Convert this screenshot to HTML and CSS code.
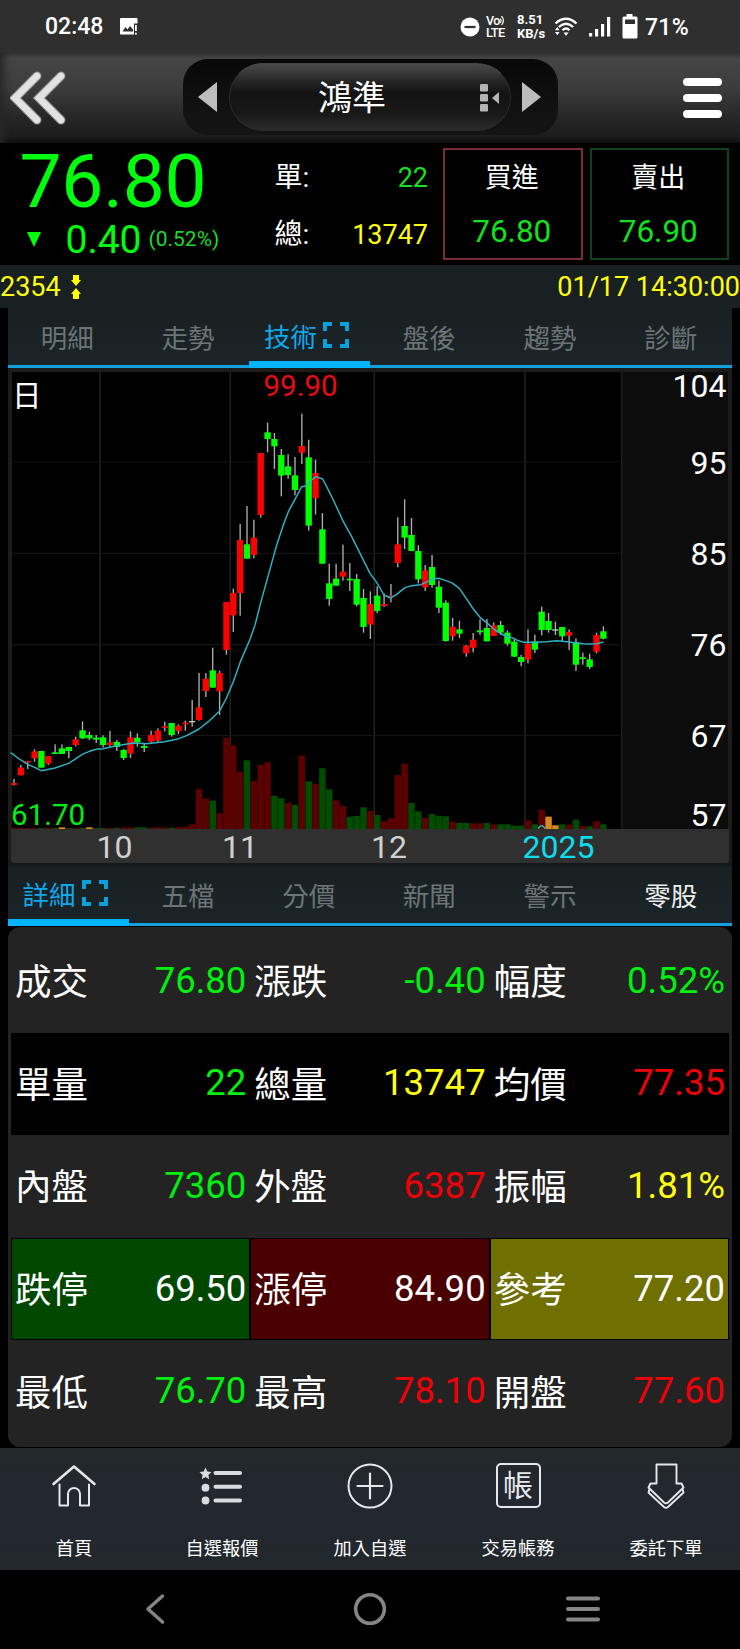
FILE: index.html
```html
<!DOCTYPE html>
<html lang="zh-Hant">
<head>
<meta charset="utf-8">
<title>鴻準 2354</title>
<link rel="stylesheet" href="styles.css">
</head>
<body>
<div class="status">
  <span class="clock">02:48</span>
  <svg class="st-img" width="19" height="19" viewBox="0 0 19 19"><path d="M2 1h15.500a1 1 0 0 1 1 1V6.500h-3.500V17.500H2a1 1 0 0 1-1-1V2a1 1 0 0 1 1-1z" fill="#fff"/><path d="M3.500 14.500l3-4.500 2 2.600 2.500-3.600 3 3.500v2z" fill="#2f2f2f"/><path d="M16 8h1.800v6H16zM16 15.800h1.800v1.800H16z" fill="#fff"/></svg>
  <div class="st-right">
    <svg class="dnd" width="20" height="20" viewBox="0 0 20 20"><circle cx="10" cy="10" r="9.500" fill="#fff"/><path d="M4.500 10h11" stroke="#2f2f2f" stroke-width="2.200"/></svg>
    <div class="volte"><span>Vo<svg width="5" height="9" viewBox="0 0 5 9"><path d="M.3 2.500q1.500 2 0 4.500M1.500 0q3.800 4.500 0 9" fill="none" stroke="#fff" stroke-width="1.200"/></svg></span><span>LTE</span></div>
    <div class="speed"><span>8.51</span><span>KB/s</span></div>
    <svg class="wifi" width="24" height="20" viewBox="0 0 24 20"><g fill="none" stroke="#fff" stroke-width="2.300"><path d="M1.500 6.500Q12-3 22.500 6.500"/><path d="M4.800 10Q12 3.500 19.200 10"/><path d="M8.500 13.200Q12 9.800 15.500 13.200"/></g><path d="M9.500 15.500h5L12 19zM1 13.200L3.300 10l2.300 3.200zM1 15h4.600l-2.300 3.300z" fill="#fff"/></svg>
    <svg class="signal" width="22" height="20" viewBox="0 0 22 20"><path d="M0 16h3.200v3.500H0zM6 12h3.200v7.500H6zM12 7h3.200v12.500H12zM18 0h3.200v19.500H18z" fill="#fff"/></svg>
    <svg class="batt" width="16" height="25" viewBox="0 0 16 25"><path d="M4.500 0h6v2.500H14a1.500 1.500 0 0 1 1.500 1.500v19a1.500 1.500 0 0 1-1.500 1.500H2A1.500 1.500 0 0 1 .5 23V4A1.500 1.500 0 0 1 2 2.500h2.500z" fill="#fff"/><path d="M3 5.500h10V10H3z" fill="#2f2f2f"/></svg>
    <span class="pct">71%</span>
  </div>
</div>

<header class="top">
  <svg class="back" width="56" height="54" viewBox="0 0 56 54"><path d="M27 5L5 27l22 22M51 5L29 27l22 22" fill="none" stroke="#8a8a8a" stroke-width="9" stroke-linecap="round"/><path d="M27 5L5 27l22 22M51 5L29 27l22 22" fill="none" stroke="#e2e2e2" stroke-width="6.800" stroke-linecap="round"/></svg>
  <div class="switcher">
    <svg width="20" height="30" viewBox="0 0 20 30"><path d="M0 15L19 0v30z" fill="#bdbdbd"/></svg>
    <div class="pill"><span>鴻準</span><svg class="grid" width="20" height="28" viewBox="0 0 20 28"><g fill="#b5b5b5"><rect width="8" height="7.500" rx="1.200"/><rect y="10" width="8" height="7.500" rx="1.200"/><rect y="20" width="8" height="7.500" rx="1.200"/><path d="M12 14l7-6v12z"/></g></svg></div>
    <svg width="20" height="30" viewBox="0 0 20 30"><path d="M19 15L0 0v30z" fill="#bdbdbd"/></svg>
  </div>
  <div class="burger"><i></i><i></i><i></i></div>
</header>

<section class="quote">
  <div class="price">
    <div class="last">76.80</div>
    <div class="delta"><i class="down"></i><span class="chg">0.40</span><span class="chgp">(0.52%)</span></div>
  </div>
  <div class="vols">
    <div><span>單:</span><span class="num g2">22</span></div>
    <div><span>總:</span><span class="num y">13747</span></div>
  </div>
  <div class="box buy"><span>買進</span><b>76.80</b></div>
  <div class="box sell"><span>賣出</span><b>76.90</b></div>
</section>
<div class="strip"><span>2354</span><svg width="10" height="24" viewBox="0 0 10 24"><path d="M2 0h6v5h2l-5 6-5-6h2zM2 24h6v-5h2l-5-6-5 6h2z" fill="#ff0"/></svg><span class="time">01/17 14:30:00</span></div>

<nav class="tabs">
  <span>明細</span><span>走勢</span>
  <span class="on">技術<svg class="full" width="26" height="26" viewBox="0 0 26 26"><path d="M2 9V2h7M17 2h7v7M24 17v7h-7M9 24H2v-7" fill="none" stroke="#0b9fdc" stroke-width="4"/></svg></span>
  <span>盤後</span><span>趨勢</span><span>診斷</span>
</nav>

<div class="chart">
  <svg width="724" height="497" viewBox="8 369 724 497">
    <rect x="8" y="368" width="724" height="498" fill="#1c1c1c"/>
    <rect x="12" y="372" width="609" height="457" fill="#000"/>
    <rect x="622.500" y="372" width="105.500" height="457" fill="#0c0c0c"/>
    <path d="M11 829H729V860a3 3 0 0 1-3 3H14a3 3 0 0 1-3-3z" fill="#303030"/>
    <path d="M8 863H732V866H8z" fill="#141a1c"/>
    <path d="M100 372V829M230.300 372V829M374.300 372V829M525 372V829" stroke="#242424" stroke-width="1.400"/>
    <path d="M12 462H621M12 553.300H621M12 644.700H621M12 735.500H621" stroke="#141414" stroke-width="1.200"/>
    <g transform="translate(0 365) scale(.33333)"><g id="volume"></g><g id="candles"></g>
      <polyline id="average" fill="none" stroke="#2fb2c4" stroke-width="4.400" stroke-linejoin="round"/>
      <path d="M1615 1391q5-9 10-9t10 9" fill="none" stroke="#0cd3e0" stroke-width="4"/>
    </g>
    <g class="ct axis"><text x="726.500" y="397">104</text><text x="726.500" y="473.700">95</text><text x="726.500" y="565">85</text><text x="726.500" y="656.300">76</text><text x="726.500" y="747">67</text><text x="726.500" y="826">57</text></g>
    <g class="ct months"><text x="96.500" y="857.700">10</text><text x="222" y="857.700">11</text><text x="371" y="857.700">12</text><text x="522.500" y="857.700" class="year">2025</text></g>
    <text class="ct mode" x="12" y="406">日</text>
    <text class="ct hi" x="263.500" y="396.300">99.90</text>
    <text class="ct lo" x="11" y="824.700">61.70</text>
  </svg>
</div>

<nav class="tabs">
  <span class="on">詳細<svg class="full" width="26" height="26" viewBox="0 0 26 26"><path d="M2 9V2h7M17 2h7v7M24 17v7h-7M9 24H2v-7" fill="none" stroke="#0b9fdc" stroke-width="4"/></svg></span>
  <span>五檔</span><span>分價</span><span>新聞</span><span>警示</span><span class="w">零股</span>
</nav>

<section class="stats">
  <div class="row"><div><span>成交</span><b class="g">76.80</b></div><div><span>漲跌</span><b class="g">-0.40</b></div><div><span>幅度</span><b class="g">0.52%</b></div></div>
  <div class="row dark"><div><span>單量</span><b class="g">22</b></div><div><span>總量</span><b class="y">13747</b></div><div><span>均價</span><b class="r">77.35</b></div></div>
  <div class="row"><div><span>內盤</span><b class="g">7360</b></div><div><span>外盤</span><b class="r">6387</b></div><div><span>振幅</span><b class="y">1.81%</b></div></div>
  <div class="row limits"><div class="lg"><span>跌停</span><b>69.50</b></div><div class="lr"><span>漲停</span><b>84.90</b></div><div class="ly"><span>參考</span><b>77.20</b></div></div>
  <div class="row"><div><span>最低</span><b class="g">76.70</b></div><div><span>最高</span><b class="r">78.10</b></div><div><span>開盤</span><b class="r">77.60</b></div></div>
</section>

<nav class="dock">
  <div><svg width="46" height="46" viewBox="0 0 46 46"><g fill="none" stroke="#e4e8ea" stroke-width="2" stroke-linejoin="round" stroke-linecap="round"><path d="M2.500 21L23 3.500 43.500 21" stroke-width="2.600"/><path d="M8.500 21.500V42.500H17V31a6 6 0 0 1 12 0V42.500H38V21.500"/></g></svg><span>首頁</span></div>
  <div><svg width="46" height="46" viewBox="0 0 46 46"><path d="M16.500 10h24.500M16.500 23.700h24.500M16.500 37.500h24.500" stroke="#d9dddf" stroke-width="4" stroke-linecap="round"/><path d="M6.500 4.500l1.800 4 4.200.5-3.100 3 .8 4.300-3.700-2.200-3.700 2.200.8-4.300-3.100-3 4.200-.5z" fill="#d9dddf"/><circle cx="6.500" cy="24.700" r="3.900" fill="#d9dddf"/><circle cx="6.500" cy="37.500" r="3.900" fill="#d9dddf"/></svg><span>自選報價</span></div>
  <div><svg width="46" height="46" viewBox="0 0 46 46"><circle cx="23" cy="23" r="21.500" fill="none" stroke="#e4e8ea" stroke-width="2"/><path d="M10.500 23h25M23 10.500v25" stroke="#e4e8ea" stroke-width="2.200" stroke-linecap="round"/></svg><span>加入自選</span></div>
  <div><i class="book">帳</i><span>交易帳務</span></div>
  <div><svg width="46" height="46" viewBox="0 0 46 46"><g fill="none" stroke="#e4e8ea" stroke-width="1.900" stroke-linejoin="round"><path d="M13.500 20.500V1.500H33.500V20.500H38.500L40.500 24.500 25 39.500Q23 41 21 39.500L5.500 24.500 7.500 20.500z"/><path d="M6.500 26L5.500 29.500 21 44Q23 45.500 25 44L40.500 29.500 39.500 26"/></g></svg><span>委託下單</span></div>
</nav>
<div class="system">
  <svg width="22" height="32" viewBox="0 0 22 32"><path d="M18.500 3L4 16l14.500 13" fill="none" stroke="#858585" stroke-width="3.500" stroke-linecap="round" stroke-linejoin="round"/></svg>
  <svg width="34" height="34" viewBox="0 0 34 34"><circle cx="17" cy="17" r="14.300" fill="none" stroke="#858585" stroke-width="3.600"/></svg>
  <svg width="34" height="28" viewBox="0 0 34 28"><path d="M2 3.500h30M2 14h30M2 24.500h30" stroke="#858585" stroke-width="4" stroke-linecap="round"/></svg>
</div>
<script src="chart.js"></script>
</body>
</html>
```
FILE: styles.css
```css
* { box-sizing: border-box; }
body { margin: 0; width: 740px; height: 1649px; background: #000; color: #fff; font-family: Roboto, "Noto Sans CJK TC", sans-serif; overflow: hidden; }
svg { display: block; flex: none; }
b, i { font-weight: 400; font-style: normal; }
.g { color: #00f010; }
.g2 { color: #14e01e; }
.y { color: #ffff10; }
.r { color: #f00008; }

.status { height: 53px; background: #2f2f2f; display: flex; align-items: center; padding-left: 45px; }
.clock { font-size: 23px; font-weight: 500; width: 74px; line-height: 26px; padding-top: 1px; }
.st-right { margin-left: auto; width: 280px; display: flex; align-items: center; }
.dnd { margin-right: 6px; }
.volte { width: 31px; font-size: 12.500px; font-weight: 500; line-height: 11.500px; display: flex; flex-direction: column; letter-spacing: -.5px; }
.volte span { display: flex; align-items: center; }
.volte span + span { letter-spacing: -.9px; font-size: 12.800px; letter-spacing: -.6px; }
.speed { width: 37px; font-size: 13px; font-weight: 700; line-height: 13.500px; display: flex; flex-direction: column; }
.wifi { margin-right: 11px; }
.signal { margin-right: 11px; }
.batt { margin-right: 7px; }
.pct { font-size: 23px; font-weight: 500; letter-spacing: .3px; line-height: 26px; padding-top: 2px; }

.top { height: 90px; display: flex; align-items: center; background: linear-gradient(#333 0, #454545 5px, #3c3c3c 35px, #262626 65px, #1c1c1c 84px, #0c0c0c 90px); padding: 0 18px 0 9.500px; box-shadow: inset 8px 0 8px -4px #262626; }
.switcher { margin-left: 117px; width: 375px; height: 76px; border-radius: 25px; background: linear-gradient(#080808, #111 60%, #141414); display: flex; align-items: center; justify-content: space-between; padding: 0 16px 0 15px; margin-top: -3px; }
.pill { width: 282px; height: 68px; border-radius: 34px; background: linear-gradient(#4a4a4a, #262626 26%, #131313 45%, #181818 75%, #2b2b2b); border: 1px solid #2b2b2b; border-top-color: #454545; display: flex; align-items: center; padding-left: 88.500px; font-size: 34px; line-height: 44px; padding-top: 3px; }
.grid { margin-left: 94px; margin-top: -1px; }
.burger { margin-left: auto; width: 39px; display: flex; flex-direction: column; gap: 8.500px; }
.burger i { height: 7.500px; border-radius: 4px; background: #fff; }

.quote { height: 122px; display: flex; }
.price { width: 265px; padding: 11px 0 0 19.500px; color: #00ff0c; }
.last { font-size: 75px; line-height: 54px; letter-spacing: -.3px; }
.delta { display: flex; align-items: center; height: 44px; margin-top: 9px; }
.down { margin-left: 7px; border: 7.500px solid transparent; border-top: 15px solid #00ff0c; border-bottom: 0; }
.chg { margin-left: 25px; font-size: 39px; width: 83px; line-height: 38px; padding-top: 2px; }
.chgp { font-size: 21px; color: #1bd92c; line-height: 24px; }
.vols { width: 178px; padding: 6px 15px 0 9.500px; font-size: 28px; }
.vols div { height: 57px; display: flex; justify-content: space-between; align-items: center; line-height: 40px; }
.num { font-size: 27px; }
.box { margin: 5px 7px 5px 0; width: 139.500px; height: 112px; border: 2px solid #7d2c37; display: flex; flex-direction: column; align-items: center; font-size: 27px; line-height: 40px; padding: 8px 2px 0 0; }
.box.sell { border-color: #0e421a; margin-right: 0; }
.box b { font-size: 31.500px; color: #14e01e; margin-top: 14px; }
.strip { height: 43px; background: #192022; display: flex; align-items: center; color: #ffff10; font-size: 27px; line-height: 40px; }
.strip svg { margin: 0 0 0 10px; }
.strip .time { margin-left: auto; }

.tabs { margin: 0 8px 1px; height: 60px; background: linear-gradient(#192022, #1a2428); display: grid; grid-template-columns: repeat(6, 1fr); border-bottom: 3px solid #14a0dc; }
.tabs span { color: #6c7476; font-size: 26.500px; line-height: 57px; text-align: center; height: 57px; padding: 2px 2px 0 0; }
.tabs .on { color: #0fa8ec; display: flex; justify-content: center; align-items: center; gap: 6.500px; padding: 2px 6px 0 0; box-shadow: 0 3px #00b4ff, inset 0 -4px #00b4ff; }
.full { margin-bottom: 5px; }
.tabs .w { color: #eceeee; }

.chart { margin: 0 8px; height: 497px; }
.chart svg { overflow: visible; }
.ct { font-family: Roboto, "Noto Sans CJK TC", sans-serif; font-size: 32px; fill: #fff; }
.axis { text-anchor: end; }
.months { fill: #d0d0d0; }
.year { fill: #0cdcec; }
.mode { font-size: 29.500px; }
.hi { font-size: 29.500px; fill: #e80c14; }
.lo { font-size: 29.500px; fill: #00f014; }

.stats { margin: 0 8px 1px; height: 520px; background: #232323; border-radius: 12px; padding: 3px; }
.row { height: 102.600px; display: grid; grid-template-columns: repeat(3, 1fr); }
.row div { display: flex; align-items: center; justify-content: space-between; padding: 0 4px; }
.row span { font-size: 36.500px; line-height: 50px; padding-top: 4px; }
.row b { font-size: 36.500px; line-height: 50px; margin-top: -1px; }
.dark { background: #000; }
.limits div { border: 1px solid #000; padding: 0 3px; }
.lg { background: #004800; }
.lr { background: #4b0000; }
.ly { background: #707000; }

.dock { height: 122px; display: grid; grid-template-columns: repeat(5, 1fr); background: linear-gradient(#22282a, #23272f 30%, #23272f 70%, #22282b); }
.dock div { display: flex; flex-direction: column; align-items: center; padding-top: 15px; }
.dock span { font-size: 18.200px; line-height: 26px; margin-top: 27px; }
.book { width: 45px; height: 45px; margin-bottom: 1px; border: 2px solid #e4e8ea; border-radius: 5px; font-size: 30px; line-height: 41px; text-align: center; color: #e4e8ea; }
.system { height: 78px; display: flex; align-items: center; }
.system svg:nth-child(1) { margin-left: 144px; }
.system svg:nth-child(2) { margin-left: 187px; }
.system svg:nth-child(3) { margin-left: 178.500px; }
```
FILE: chart.js
```js
// Daily candles: wick top, body top, body bottom, wick bottom, colour.
const days = `1242,1254,1260,1262,r 1200,1208,1231,1231,r 1188,1188,1192,1212,r 1153,1159,1180,1190,r 1158,1158,1208,1208,g
1173,1173,1196,1200,r 1138,1162,1167,1167,g 1138,1150,1167,1167,g 1145,1146,1158,1180,g 1115,1123,1140,1144,r
1069,1096,1120,1122,g 1100,1110,1120,1125,g 1110,1118,1124,1134,g 1111,1117,1140,1147,g 1098,1132,1140,1145,r
1125,1131,1146,1158,g 1152,1155,1179,1185,g 1099,1117,1166,1179,r 1105,1118,1132,1145,g 1137,1143,1149,1161,g
1097,1110,1130,1133,r 1090,1097,1127,1133,r 1070,1084,1089,1099,r 1074,1074,1110,1115,g 1078,1082,1098,1107,r
1067,1073,1078,1097,r 1005,1068,1072,1085,w 924,1027,1065,1067,r 924,941,978,996,r 848,916,968,968,g
917,924,979,1050,r 711,711,855,869,r 671,684,751,801,r 477,525,684,752,r 423,538,581,581,g
464,518,570,580,r 264,264,450,458,r 173,202,222,262,g 204,222,244,312,g 252,270,332,394,g
268,304,330,341,g 276,331,375,391,g 146,243,263,297,r 224,277,482,497,g 284,324,400,449,r
444,493,596,596,g 596,655,702,722,g 596,641,662,662,g 539,620,635,647,r 594,641,646,678,g
627,642,719,724,g 672,699,786,803,g 679,717,779,822,r 664,692,738,745,g 685,717,723,726,r
657,692,697,712,r 457,538,594,607,r 403,483,518,552,g 459,510,558,558,g 541,558,643,655,g
600,616,667,678,r 570,606,660,668,g 647,665,728,744,g 706,713,828,830,g 759,786,814,827,r
767,793,806,819,g 840,842,865,875,r 804,824,848,862,r 763,796,802,810,g 762,789,829,829,g
772,781,813,813,r 768,780,803,810,g 796,803,836,842,g 824,830,875,876,g 870,876,891,904,g
793,836,884,895,r 809,830,854,864,g 725,740,795,811,g 744,768,795,803,g 770,793,797,810,w
786,786,814,830,g 793,801,812,855,r 820,831,899,918,g 863,877,882,899,g 866,883,906,912,g
803,810,860,865,r 784,799,821,823,g`.split(/\s+/).map(d => d.split(','));

// Volume bar heights with colours.
const volumes = `3r 3r 3r 3r 3g 3r 3g 5o 3g 3r 3g 5o 3g 3g 3r 3g 5r 5r 5g 5g 4r 5r 4r 4g 6r 7r 14r
120r 92r 85g 47r 274r 251r 171r 206g 144r 193r 200r 100g 92g 78r 72g 220r 143g 135r 182g 119g 86r 69r
37g 39g 65g 54r 42g 24r 32r 162r 196r 78g 53g 34r 45g 39g 38g 22r 18g 18g 17r 17r 18g 14r 14g 14g 10g 10g
26r 14g 58r 37o 11o 14g 13r 28g 9r 8g 23r 14g`.split(/\s+/);

const step = 20.56, first = 42, base = 1392;
const fills = { r: '#ff0000', g: '#00ff00', w: '#c8c8b8' };
const barFills = { r: '#5c0000', g: '#004c00', o: '#d98a1c' };
const rect = (x, y, w, h, f) => `<rect x="${x}" y="${y}" width="${w}" height="${h}" fill="${f}"/>`;

document.getElementById('candles').innerHTML = days.map(([hi, top, bottom, lo, c], i) => {
  const x = first + step * i;
  return rect(x - 2, hi, 4, lo - hi, '#b0b0b0') + rect(x - 9.5, top, 19, bottom - top, fills[c]);
}).join('');

document.getElementById('volume').innerHTML = volumes.map((v, i) => {
  const h = parseInt(v, 10);
  return rect(first + step * i - 9.7, base - h, 19.4, h, barFills[v.slice(-1)]);
}).join('');

document.getElementById('average').setAttribute('points',
  `32,1163 62,1185 83,1198 104,1207 124,1217 165,1209 206,1195 247,1168 268,1159 289,1153 309,1151 350,1142 400,1134 440,1136
  494,1130 536,1121 560,1112 597,1092 625,1070 659,1038 679,1000 700,950 720,893 750,823 765,780 783,710 808,620
  828,547 850,480 865,440 885,403 905,365 920,362 935,345 948,335 968,342 980,365 1000,405 1030,470 1055,515
  1080,565 1110,625 1130,652 1152,690 1172,699 1190,688 1215,668 1235,662 1262,659 1283,650 1300,641 1318,640
  1355,653 1378,670 1397,698 1420,732 1440,757 1460,773 1485,795 1510,810 1535,818 1550,825 1570,832 1600,832
  1640,830 1670,827 1700,830 1750,836 1770,837 1790,836 1810,831`);
```
